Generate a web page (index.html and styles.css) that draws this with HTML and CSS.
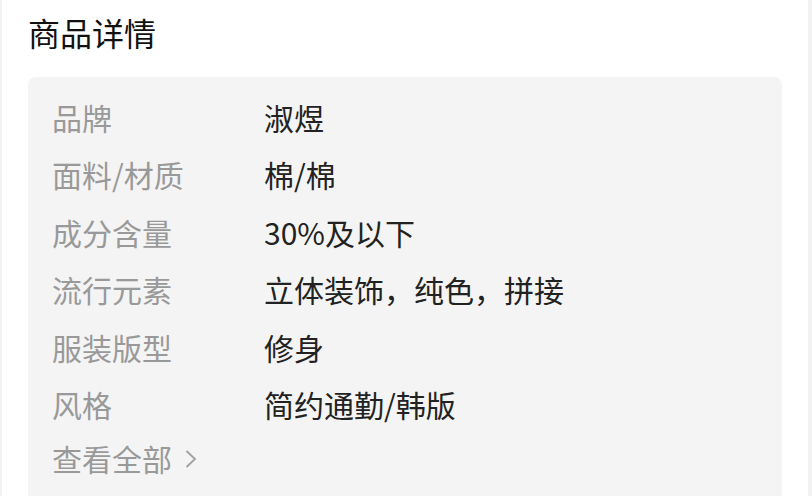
FILE: index.html
```html
<!DOCTYPE html>
<html lang="zh-CN">
<head>
<meta charset="utf-8">
<title>商品详情</title>
<link rel="stylesheet" href="styles.css">
</head>
<body>
<div class="card">
  <h1 class="title">商品详情</h1>
  <div class="box">
    <div class="row"><span class="label">品牌</span><span class="value">淑煜</span></div>
    <div class="row"><span class="label">面料/材质</span><span class="value">棉/棉</span></div>
    <div class="row"><span class="label">成分含量</span><span class="value">30%及以下</span></div>
    <div class="row"><span class="label">流行元素</span><span class="value">立体装饰，纯色，拼接</span></div>
    <div class="row"><span class="label">服装版型</span><span class="value">修身</span></div>
    <div class="row"><span class="label">风格</span><span class="value">简约通勤/韩版</span></div>
    <div class="more">查看全部<svg class="chev" width="12" height="20" viewBox="0 0 12 20"><path d="M1.5 2 L10 10 L1.5 18" fill="none" stroke="#a0a0a0" stroke-width="1.8"/></svg></div>
  </div>
</div>
</body>
</html>
```

FILE: styles.css
```css
html, body {
  margin: 0;
  padding: 0;
  background: #f2f2f2;
  height: 100%;
  overflow: hidden;
}
body {
  font-family: "Noto Sans CJK SC", "Noto Sans", sans-serif;
}
.card {
  margin: 0 4px 0 2px;
  background: #fff;
  height: 496px;
  padding: 0 26px;
  box-sizing: border-box;
  overflow: hidden;
}
.title {
  margin: 0;
  padding-top: 12px;
  font-size: 32px;
  line-height: 40px;
  font-weight: 400;
  color: #111;
  margin-bottom: 25px;
}
.box {
  background: #f4f4f4;
  border-radius: 8px 8px 0 0;
  padding: 12px 24px 40px;
  font-size: 30px;
}
.row {
  display: grid;
  grid-template-columns: 212px 1fr;
  line-height: 57.4px;
}
.label {
  color: #999;
}
.value {
  color: #222;
}
.more {
  display: flex;
  align-items: center;
  gap: 13px;
  line-height: 50px;
  color: #999;
}
.chev {
  display: block;
  margin-top: 2px;
}
```
